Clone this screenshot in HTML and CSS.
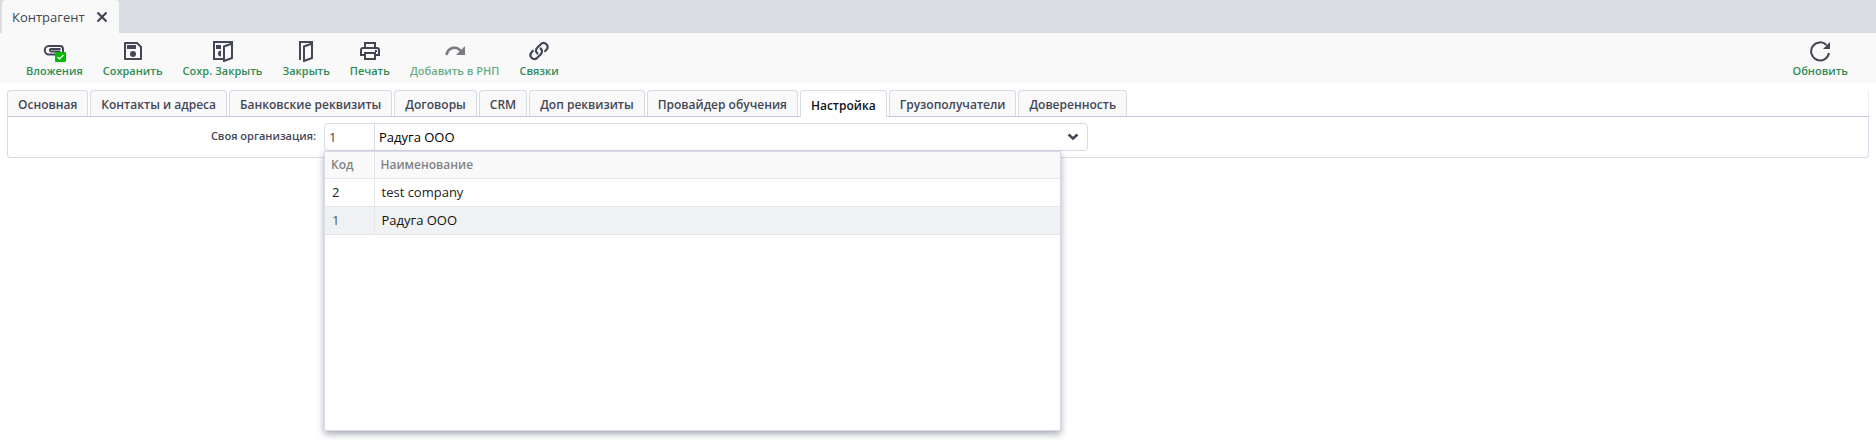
FILE: index.html
```html
<!DOCTYPE html>
<html lang="ru">
<head>
<meta charset="utf-8">
<title>Контрагент</title>
<link rel="stylesheet" href="styles.css">
</head>
<body>
<header class="window-tabs">
  <div class="window-tab">
    <span>Контрагент</span>
    <button class="close" type="button" aria-label="Закрыть вкладку"><svg width="12" height="12" viewBox="0 0 12 12"><path d="M1.500 1.500l9 9M10.500 1.500l-9 9" fill="none" stroke="currentColor" stroke-width="2.200"/></svg></button>
  </div>
</header>
<div class="toolbar" role="toolbar">
  <button class="tool" type="button">
    <svg width="24" height="22" viewBox="0 0 24 22"><path d="M21 12V9a3 3 0 0 0-3-3H7a4.250 4.250 0 0 0 0 8.500H13" fill="none" stroke="currentColor" stroke-width="2"/><path d="M18.500 9H9a1.250 1.250 0 0 0 0 2.500h9.500" fill="none" stroke="currentColor" stroke-width="1.800"/><rect x="13" y="12" width="11" height="10" rx="1" fill="#0b0"/><path d="M15.500 17l2 2 4-4" fill="none" stroke="#fff" stroke-width="1.200"/></svg>
    <span>Вложения</span>
  </button>
  <button class="tool" type="button">
    <svg width="24" height="22" viewBox="0 0 24 22"><path d="M4 3h12l4 4v12H4z" fill="none" stroke="currentColor" stroke-width="2" stroke-linejoin="round"/><path d="M6 5h9v4H6z" fill="currentColor"/><circle cx="12" cy="14" r="3" fill="currentColor"/></svg>
    <span>Сохранить</span>
  </button>
  <button class="tool" type="button">
    <svg width="24" height="22" viewBox="0 0 24 22"><path d="M12 19H3V2h18v3" fill="none" stroke="currentColor" stroke-width="2"/><path d="M5 5h5v4H5zM10 10.500a3 3 0 0 0 0 6z" fill="currentColor"/><path d="M13 6.500l8-3V18l-8 3z" fill="none" stroke="currentColor" stroke-width="2"/></svg>
    <span>Сохр. Закрыть</span>
  </button>
  <button class="tool" type="button">
    <svg width="24" height="22" viewBox="0 0 24 22"><path d="M6 20V2h12v3" fill="none" stroke="currentColor" stroke-width="2"/><path d="M10 6.500l8-3V18l-8 3z" fill="none" stroke="currentColor" stroke-width="2"/></svg>
    <span>Закрыть</span>
  </button>
  <button class="tool" type="button">
    <svg width="24" height="22" viewBox="0 0 24 22"><path d="M7 7V3h10v4M7 15H3v-5a2 2 0 0 1 2-2h14a2 2 0 0 1 2 2v5h-4M7 13h10v6H7z" fill="none" stroke="currentColor" stroke-width="2"/><path d="M17 10h2v2h-2z" fill="currentColor"/></svg>
    <span>Печать</span>
  </button>
  <button class="tool" type="button" disabled>
    <svg width="24" height="22" viewBox="0 0 24 22"><path d="M3.500 15c1.500-8 10.500-10 15-3" fill="none" stroke="currentColor" stroke-width="2.600"/><path d="M22 6v9h-9z" fill="currentColor"/></svg>
    <span>Добавить в РНП</span>
  </button>
  <button class="tool" type="button">
    <svg width="24" height="22" viewBox="0 0 24 22"><path d="M11 14c-2.500-1.800-2.500-4.500-.8-6.200l3.600-3.600c4-3.400 9 1.600 5.600 5.600L17.500 11.700M13 8c2.500 1.800 2.500 4.500.8 6.200l-3.600 3.600c-4 3.400-9-1.600-5.600-5.600L6.500 10.300" fill="none" stroke="currentColor" stroke-width="2.200"/></svg>
    <span>Связки</span>
  </button>
  <button class="tool refresh" type="button">
    <svg width="24" height="22" viewBox="0 0 24 22"><path d="M18.500 5A9 9 0 1 0 21 13" fill="none" stroke="currentColor" stroke-width="2"/><path d="M22 2v7h-7z" fill="currentColor"/></svg>
    <span>Обновить</span>
  </button>
</div>
<main class="content">
  <div class="tabs" role="tablist">
    <button class="tab" type="button" role="tab">Основная</button>
    <button class="tab" type="button" role="tab">Контакты и адреса</button>
    <button class="tab" type="button" role="tab">Банковские реквизиты</button>
    <button class="tab" type="button" role="tab">Договоры</button>
    <button class="tab" type="button" role="tab">CRM</button>
    <button class="tab" type="button" role="tab">Доп реквизиты</button>
    <button class="tab" type="button" role="tab">Провайдер обучения</button>
    <button class="tab active" type="button" role="tab" aria-selected="true">Настройка</button>
    <button class="tab" type="button" role="tab">Грузополучатели</button>
    <button class="tab" type="button" role="tab">Доверенность</button>
  </div>
  <section class="panel" role="tabpanel">
    <label class="field-label" for="org-code">Своя организация:</label>
    <div class="combo">
      <input class="code" id="org-code" type="text" value="1">
      <input class="name" type="text" value="Радуга ООО" aria-label="Наименование организации">
      <button class="toggle" type="button" aria-label="Открыть список"><svg width="12" height="8" viewBox="0 0 12 8"><path d="M1.500 1.500L6 5.500l4.500-4" fill="none" stroke="currentColor" stroke-width="2.500"/></svg></button>
      <div class="dropdown">
        <table class="options">
          <thead><tr><th class="col-code">Код</th><th>Наименование</th></tr></thead>
          <tbody>
            <tr><td>2</td><td>test company</td></tr>
            <tr class="selected"><td>1</td><td>Радуга ООО</td></tr>
          </tbody>
        </table>
      </div>
    </div>
  </section>
</main>
</body>
</html>
```
FILE: styles.css
```css
* { box-sizing: border-box; }

body {
  min-height: 100vh;
  margin: 0;
  background: #fff;
  color: #434655;
  font-family: "Open Sans", "Noto Sans", sans-serif;
  font-size: 13px;
}

button, input { font: inherit; color: inherit; }

button {
  margin: 0;
  padding: 0;
  border: 0;
  background: none;
}

svg { display: block; }

.window-tabs {
  display: flex;
  padding-left: 2px;
  background: #dadde2;
}

.window-tab {
  display: flex;
  align-items: center;
  gap: 11px;
  height: 33px;
  padding: 0 11px 0 10px;
  border-radius: 4px 4px 0 0;
  background: #f9f9f9;
}

.toolbar {
  display: flex;
  gap: 20px;
  height: 50px;
  padding: 7px 28px 0 26px;
  background: #f9f9f9;
}

.tool {
  display: flex;
  flex-direction: column;
  align-items: center;
  align-self: flex-start;
  gap: 1px;
  line-height: 16px;
  font-size: 11px;
  font-weight: 600;
}

.tool span { color: #2e8b57; }
.tool:disabled { opacity: 0.7; }
.refresh { margin-left: auto; }

.content { padding: 7px 7px 0; }

.tabs {
  display: flex;
  gap: 2px;
  border-right: 1px solid #eeeef5;
}

.tab {
  height: 26px;
  padding: 2px 10px 0;
  border: 1px solid #d8d9e6;
  border-bottom: 0;
  border-radius: 4px 4px 0 0;
  background: #f9f9f9;
  font-size: 12px;
  font-weight: 600;
}

.tab.active {
  height: 27px;
  margin-bottom: -1px;
  z-index: 1;
  background: #fff;
  color: #101018;
}

.panel {
  display: grid;
  grid-template-columns: 308px 764px;
  column-gap: 8px;
  padding: 6px 0;
  border: 1px solid #d8d9e6;
  border-top-color: #c5cbdb;
  border-radius: 0 0 4px 4px;
}

.field-label {
  padding-top: 4px;
  text-align: right;
  font-size: 11px;
  font-weight: 600;
  line-height: 18px;
}

.combo {
  position: relative;
  display: flex;
  height: 28px;
  border: 1px solid #d8d9e6;
  border-radius: 4px;
  background: #fff;
}

.combo input {
  min-width: 0;
  padding: 0 4px;
  border: 0;
  outline: 0;
  background: none;
}

.combo .code {
  width: 50px;
  border-right: 1px solid #d8d9e6;
}

.combo .name {
  flex: 1;
  color: #000;
}

.toggle {
  display: grid;
  place-items: center;
  width: 28px;
}

.dropdown {
  position: absolute;
  top: calc(100% + 1px);
  left: -1px;
  width: 737px;
  height: 280px;
  border: 1px solid #d8d9e6;
  background: #fff;
  box-shadow: 0 3px 7px #a5aab2;
}

.options {
  width: 100%;
  border-collapse: collapse;
  line-height: 18px;
  text-align: left;
}

.options th {
  height: 26px;
  padding: 0 6px;
  border-bottom: 1px solid #e4e6eb;
  background: #f9f9f9;
  color: #808285;
  font-size: 12px;
  font-weight: 600;
}

.options td {
  height: 28px;
  padding: 0 7px;
  border-bottom: 1px solid #e4e6eb;
  color: #222;
}

.options .col-code { width: 49px; }
.options th:first-child, .options td:first-child { border-right: 1px solid #e4e6eb; }
.options .selected { background: #eff1f3; }
.options .selected td { color: #111; }
.options .selected td:first-child { color: #555; }
```
